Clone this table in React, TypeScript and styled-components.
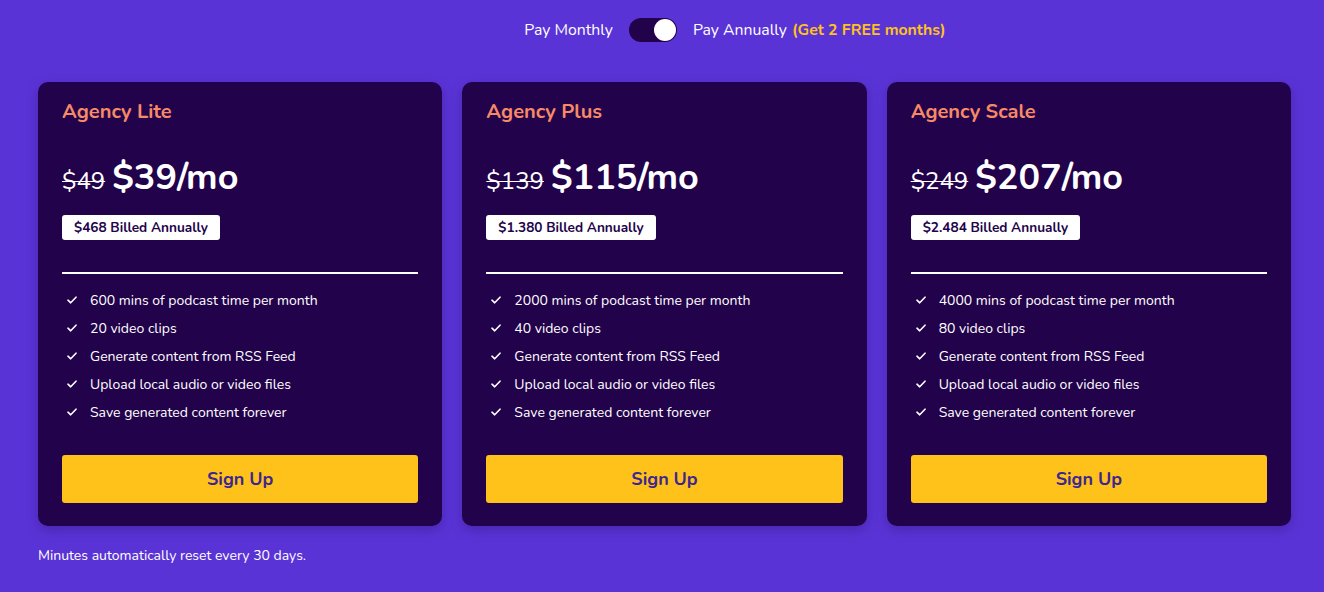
import React from "react";
import styled, { createGlobalStyle } from "styled-components";

const Global = createGlobalStyle`
  html, body { margin: 0; padding: 0; }
  body {
    background: #5a33d6;
    font-family: "Nunito", "Lato", "Noto Sans", sans-serif;
    color: #fff;
  }
`;

const Page = styled.div`
  width: 1324px;
  height: 592px;
  box-sizing: border-box;
  padding: 17px 33px 0 38px;
  display: flex;
  flex-direction: column;
`;

const ToggleRow = styled.div`
  display: flex;
  align-items: center;
  justify-content: center;
  gap: 16px;
  font-size: 15.8px;
  height: 26px;
  padding-left: 141px;
`;

const Label = styled.span`
  color: #fff;
`;

const Free = styled.span`
  color: #ffc21a;
  font-weight: 700;
  margin-left: 5px;
`;

const Switch = styled.div`
  width: 48px;
  height: 24px;
  border-radius: 12px;
  background: #22024a;
  position: relative;
`;

const Knob = styled.div`
  position: absolute;
  right: 1px;
  top: 1px;
  width: 22px;
  height: 22px;
  border-radius: 50%;
  background: #fff;
`;

const Cards = styled.div`
  margin-top: 39px;
  display: grid;
  grid-template-columns: repeat(3, 1fr);
  column-gap: 20px;
`;

const Card = styled.div`
  background: #22024a;
  border-radius: 10px;
  height: 444px;
  box-sizing: border-box;
  padding: 17px 24px 0 24px;
  display: flex;
  flex-direction: column;
  box-shadow: 0 4px 12px rgba(20, 0, 60, 0.25);
`;

const Title = styled.div`
  color: #f78a66;
  font-size: 20px;
  font-weight: 700;
  line-height: 26px;
`;

const PriceRow = styled.div`
  margin-top: 31px;
  display: flex;
  align-items: baseline;
  gap: 7px;
  line-height: 44px;
`;

const OldPrice = styled.span`
  font-size: 24px;
  text-decoration: line-through;
  text-decoration-thickness: 1px;
  color: #fff;
`;

const NewPrice = styled.span`
  font-size: 36px;
  font-weight: 700;
  color: #fff;
`;

const Badge = styled.div`
  align-self: flex-start;
  margin-top: 12px;
  background: #fff;
  color: #22024a;
  font-size: 13.6px;
  font-weight: 700;
  padding: 0 12px;
  height: 25px;
  line-height: 25px;
  border-radius: 3px;
`;

const Divider = styled.div`
  margin-top: 32px;
  height: 2px;
  background: #fff;
`;

const Features = styled.ul`
  list-style: none;
  margin: 12px 0 0 0;
  padding: 0 0 0 5px;
  display: flex;
  flex-direction: column;
`;

const Feature = styled.li`
  display: flex;
  align-items: center;
  gap: 13px;
  height: 28px;
  font-size: 14px;
  color: #fff;
`;

const Button = styled.button`
  margin-top: 29px;
  height: 48px;
  border: none;
  border-radius: 3px;
  background: #ffc21a;
  color: #3d2690;
  font-family: inherit;
  font-size: 18px;
  font-weight: 700;
  cursor: pointer;
`;

const Note = styled.div`
  margin-top: 20px;
  font-size: 14px;
  color: #fff;
`;

const Check = () => (
  <svg width="10" height="8" viewBox="0 0 10 8" fill="none">
    <path d="M1 4.2 L3.7 6.8 L9 1.2" stroke="#fff" strokeWidth="1.6" strokeLinecap="round" strokeLinejoin="round" />
  </svg>
);

type Plan = {
  name: string;
  old: string;
  price: string;
  billed: string;
  mins: string;
  clips: string;
};

const plans: Plan[] = [
  { name: "Agency Lite", old: "$49", price: "$39/mo", billed: "$468 Billed Annually", mins: "600", clips: "20" },
  { name: "Agency Plus", old: "$139", price: "$115/mo", billed: "$1.380 Billed Annually", mins: "2000", clips: "40" },
  { name: "Agency Scale", old: "$249", price: "$207/mo", billed: "$2.484 Billed Annually", mins: "4000", clips: "80" },
];

export default function App() {
  return (
    <>
      <Global />
      <Page>
        <ToggleRow>
          <Label>Pay Monthly</Label>
          <Switch>
            <Knob />
          </Switch>
          <Label>
            Pay Annually<Free>(Get 2 FREE months)</Free>
          </Label>
        </ToggleRow>
        <Cards>
          {plans.map((p) => (
            <Card key={p.name}>
              <Title>{p.name}</Title>
              <PriceRow>
                <OldPrice>{p.old}</OldPrice>
                <NewPrice>{p.price}</NewPrice>
              </PriceRow>
              <Badge>{p.billed}</Badge>
              <Divider />
              <Features>
                {[
                  `${p.mins} mins of podcast time per month`,
                  `${p.clips} video clips`,
                  "Generate content from RSS Feed",
                  "Upload local audio or video files",
                  "Save generated content forever",
                ].map((f) => (
                  <Feature key={f}>
                    <Check />
                    {f}
                  </Feature>
                ))}
              </Features>
              <Button>Sign Up</Button>
            </Card>
          ))}
        </Cards>
        <Note>Minutes automatically reset every 30 days.</Note>
      </Page>
    </>
  );
}
